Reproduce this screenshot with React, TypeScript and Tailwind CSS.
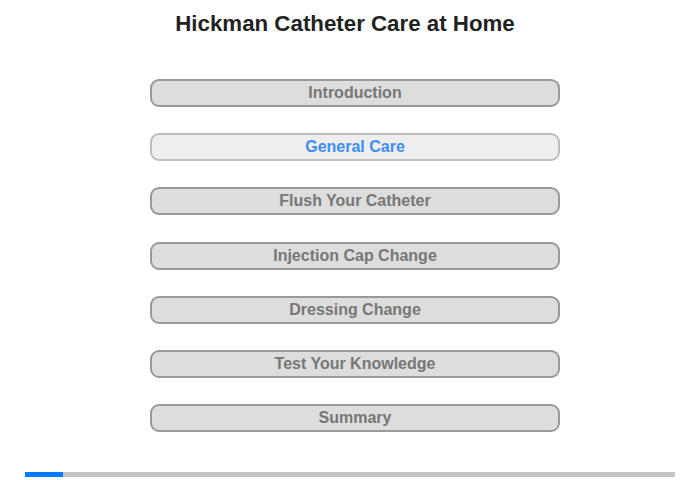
const sections = [
  "Introduction",
  "General Care",
  "Flush Your Catheter",
  "Injection Cap Change",
  "Dressing Change",
  "Test Your Knowledge",
  "Summary",
];

const active = "General Care";

export default function App() {
  return (
    <div className="w-[700px] h-[480px] bg-white flex flex-col font-['Liberation_Sans',Arial,sans-serif]">
      <h1 className="w-[690px] pt-[11px] text-center text-[22.3px] leading-[25px] font-bold text-[#222]">
        Hickman Catheter Care at Home
      </h1>

      <nav className="ml-[150px] mt-[43px] w-[410px] flex flex-col gap-[26.2px]">
        {sections.map((s) => {
          const isActive = s === active;
          return (
            <button
              key={s}
              className={
                isActive
                  ? "h-[28px] w-full rounded-[9px] border-2 border-[#bdbdbd] bg-[#eeeeee] pt-[3px] text-[16px] leading-[18px] font-bold text-[#3c8df5] flex justify-center items-start"
                  : "h-[28px] w-full rounded-[9px] border-2 border-[#999999] bg-[#dddddd] pt-[3px] text-[16px] leading-[18px] font-bold text-[#777777] flex justify-center items-start"
              }
            >
              {s}
            </button>
          );
        })}
      </nav>

      {/* progress */}
      <div className="mt-auto mb-[3px] mx-[25px] h-[5px] bg-[#c4c4c4] flex">
        <div className="w-[38px] h-full bg-[#007bff]" />
      </div>
    </div>
  );
}
